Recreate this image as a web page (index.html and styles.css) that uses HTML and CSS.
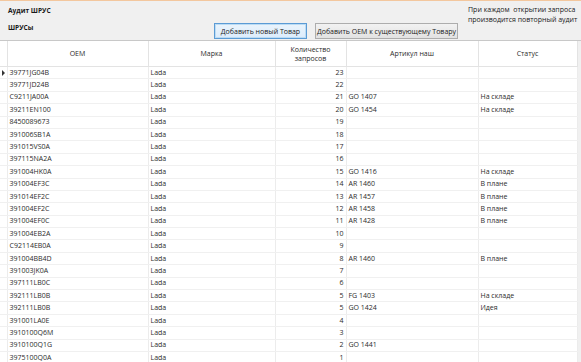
FILE: index.html
```html
<!DOCTYPE html>
<html lang="ru">

<head>
	<meta charset="UTF-8">
	<meta name="viewport" content="width=device-width, initial-scale=1.0">
	<title>Аудит ШРУС</title>
	<link rel="stylesheet" href="styles.css">
</head>

<body>
	<div class="toolbar">
		<div class="titles">
			<div class="title">Аудит ШРУС</div>
			<div class="title">ШРУСы</div>
		</div>
		<div class="actions">
			<button class="btn btn-default">Добавить новый Товар</button>
			<button class="btn btn-wide">Добавить OEM к существующему Товару</button>
		</div>
		<div class="note">При каждом&nbsp; открытии запроса<br>производится повторный аудит</div>
	</div>

	<div class="grid-wrap">
		<table class="grid">
			<colgroup>
				<col class="c-rowhead">
				<col class="c-oem">
				<col class="c-brand">
				<col class="c-count">
				<col class="c-article">
				<col class="c-status">
			</colgroup>
			<thead>
				<tr>
					<th class="rowhead"></th>
					<th>OEM</th>
					<th>Марка</th>
					<th>Количество<br>запросов</th>
					<th>Артикул наш</th>
					<th>Статус</th>
				</tr>
			</thead>
			<tbody id="gridBody"></tbody>
		</table>
	</div>

	<script>
		document.addEventListener('DOMContentLoaded', function () {
			const rows = [
				['39771JG04B', 'Lada', 23, '', ''],
				['39771JD24B', 'Lada', 22, '', ''],
				['C9211JA00A', 'Lada', 21, 'GO 1407', 'На складе'],
				['39211EN100', 'Lada', 20, 'GO 1454', 'На складе'],
				['8450089673', 'Lada', 19, '', ''],
				['391006SB1A', 'Lada', 18, '', ''],
				['391015VS0A', 'Lada', 17, '', ''],
				['397115NA2A', 'Lada', 16, '', ''],
				['391004HK0A', 'Lada', 15, 'GO 1416', 'На складе'],
				['391004EF3C', 'Lada', 14, 'AR 1460', 'В плане'],
				['391014EF2C', 'Lada', 13, 'AR 1457', 'В плане'],
				['391004EF2C', 'Lada', 12, 'AR 1458', 'В плане'],
				['391004EF0C', 'Lada', 11, 'AR 1428', 'В плане'],
				['391004EB2A', 'Lada', 10, '', ''],
				['C92114EB0A', 'Lada', 9, '', ''],
				['391004BB4D', 'Lada', 8, 'AR 1460', 'В плане'],
				['391003JK0A', 'Lada', 7, '', ''],
				['397111LB0C', 'Lada', 6, '', ''],
				['392111LB0B', 'Lada', 5, 'FG 1403', 'На складе'],
				['392111LB0B', 'Lada', 5, 'GO 1424', 'Идея'],
				['391001LA0E', 'Lada', 4, '', ''],
				['3910100Q6M', 'Lada', 3, '', ''],
				['3910100Q1G', 'Lada', 2, 'GO 1441', ''],
				['3975100Q0A', 'Lada', 1, '', '']
			];
			const body = document.getElementById('gridBody');
			rows.forEach((r, i) => {
				const tr = document.createElement('tr');
				tr.innerHTML = `
					<td class="rowhead">${i === 0 ? '<span class="current"></span>' : ''}</td>
					<td>${r[0]}</td>
					<td>${r[1]}</td>
					<td class="num">${r[2]}</td>
					<td>${r[3]}</td>
					<td>${r[4]}</td>
				`;
				body.appendChild(tr);
			});
		});
	</script>
</body>

</html>
```

FILE: styles.css
```css
body {
	font-family: 'Open Sans', 'Noto Sans', sans-serif;
	font-size: 7px;
	color: #2b2b2b;
	margin: 0;
	padding: 0;
	background-color: #f0f0f0;
	overflow: hidden;
}

.toolbar {
	height: 39px;
	display: flex;
	border-top: 1px solid #f3c79e;
	border-bottom: 1px solid #c8c8c8;
	background-color: #f0f0f0;
}

.titles {
	flex: 0 0 206px;
	padding: 4px 0 0 8px;
}

.title {
	font-weight: bold;
	font-size: 6.6px;
	color: #1a1a1a;
	height: 17px;
	line-height: 11px;
}

.actions {
	flex: 0 0 auto;
	display: flex;
	align-items: flex-end;
	gap: 8px;
	padding-bottom: 1px;
}

.btn {
	font-family: inherit;
	font-size: 7px;
	color: #1a1a1a;
	height: 16px;
	padding: 0;
	white-space: nowrap;
	border: 1px solid #adadad;
	background: linear-gradient(#f2f2f2, #e2e2e2);
}

.btn-default {
	width: 93px;
	border-color: #5b9bd5;
	background: linear-gradient(#eaf4fc, #dcecfc);
	box-shadow: inset 0 0 0 1px #bcdcf4;
}

.btn-wide {
	width: 143px;
}

.note {
	margin-left: 10px;
	padding-top: 4px;
	font-size: 7px;
	line-height: 9.5px;
	white-space: nowrap;
	color: #1a1a1a;
}

.grid-wrap {
	background-color: #f0f0f0;
}

.grid {
	border-collapse: collapse;
	table-layout: fixed;
	width: 577px;
	background-color: #fff;
}

.c-rowhead { width: 7px; }
.c-oem { width: 141px; }
.c-brand { width: 127px; }
.c-count { width: 71px; }
.c-article { width: 132px; }
.c-status { width: 99px; }

.grid th {
	height: 25px;
	padding: 0;
	font-weight: normal;
	line-height: 9px;
	text-align: center;
	border-right: 1px solid #e3e3e3;
	border-bottom: 1px solid #e3e3e3;
}

.grid td {
	height: 11.4px;
	padding: 0 2px;
	line-height: 10px;
	white-space: nowrap;
	overflow: hidden;
	border-right: 1px solid #ececec;
	border-bottom: 1px solid #f0f0f0;
}

.grid td.num {
	text-align: right;
}

.grid .rowhead {
	padding: 0;
	position: relative;
}

.current {
	position: absolute;
	left: 2px;
	top: 3px;
	border-left: 3px solid #333;
	border-top: 3px solid transparent;
	border-bottom: 3px solid transparent;
}
```
